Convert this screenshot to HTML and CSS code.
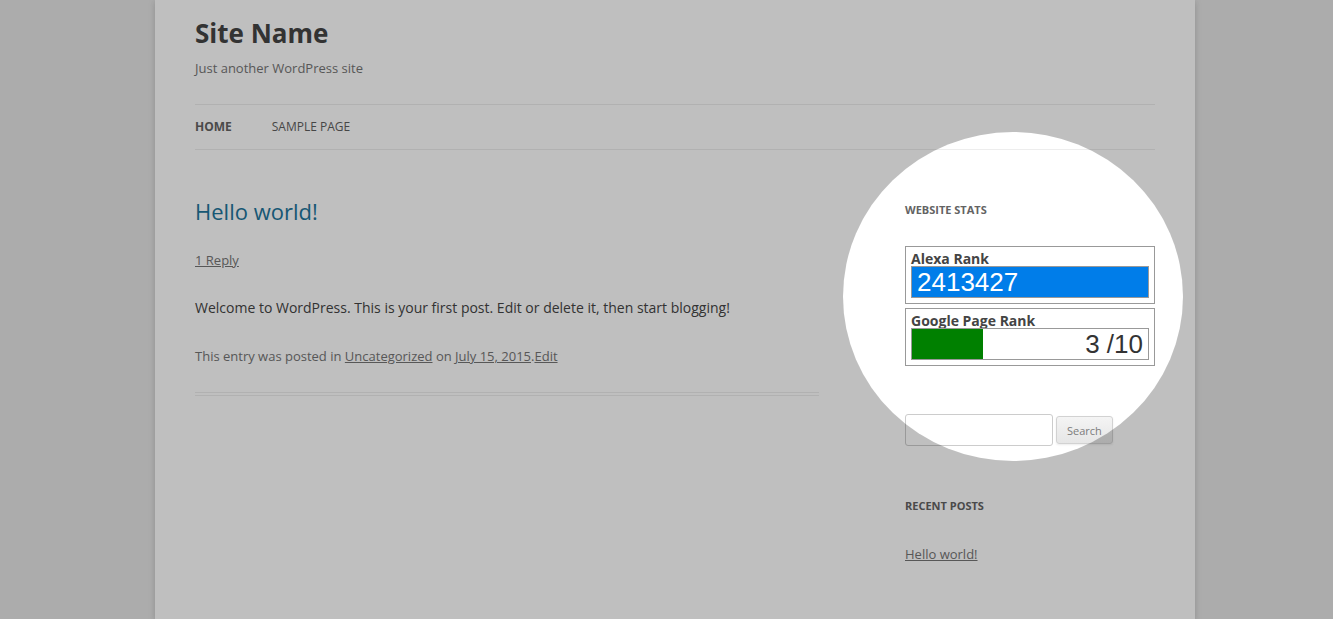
FILE: index.html
```html
<!DOCTYPE html>
<html lang="en">
<head>
<meta charset="utf-8">
<title>Site Name | Just another WordPress site</title>
<link rel="stylesheet" href="styles.css">
</head>
<body>
<div class="page">
  <div class="site">
    <header class="site-header">
      <h1 class="site-title">Site Name</h1>
      <h2 class="site-description">Just another WordPress site</h2>
      <nav class="main-navigation">
        <ul class="nav-menu">
          <li class="current"><a href="#">Home</a></li>
          <li><a href="#">Sample Page</a></li>
        </ul>
      </nav>
    </header>

    <div class="main">
      <div class="content">
        <article class="post">
          <h1 class="entry-title">Hello world!</h1>
          <div class="comments-link"><a href="#">1 Reply</a></div>
          <div class="entry-content">
            <p>Welcome to WordPress. This is your first post. Edit or delete it, then start blogging!</p>
          </div>
          <footer class="entry-meta">This entry was posted in <a href="#">Uncategorized</a> on <a href="#">July 15, 2015</a>.<a href="#">Edit</a></footer>
        </article>
      </div>

      <aside class="sidebar">
        <section class="widget">
          <h3 class="widget-title">Website Stats</h3>
          <div class="stat-box">
            <div class="stat-label">Alexa Rank</div>
            <div class="stat-bar alexa"><span class="stat-value">2413427</span></div>
          </div>
          <div class="stat-box">
            <div class="stat-label">Google Page Rank</div>
            <div class="stat-bar pagerank">
              <div class="pr-fill" style="width: 30%"></div>
              <span class="stat-value right">3 /10</span>
            </div>
          </div>
        </section>

        <form class="search-form">
          <input class="search-input" type="text">
          <button class="search-button" type="button">Search</button>
        </form>

        <section class="widget recent">
          <h3 class="widget-title">Recent Posts</h3>
          <ul class="recent-list">
            <li><a href="#">Hello world!</a></li>
          </ul>
        </section>
      </aside>
    </div>

    <div class="spotlight"></div>
  </div>
</div>
</body>
</html>
```

FILE: styles.css
```css
html, body {
  margin: 0;
  padding: 0;
  height: 100%;
  overflow: hidden;
}

body {
  background: #e6e6e6;
  font-family: "Open Sans", "Noto Sans", sans-serif;
  color: #444;
}

.page {
  padding-left: 17px;
  height: 100%;
}

.site {
  position: relative;
  width: 1040px;
  box-sizing: border-box;
  margin: 0 auto;
  padding: 0 40px;
  min-height: 100%;
  background: #fff;
  box-shadow: rgba(100, 100, 100, 0.3) 0 2px 6px;
}

a {
  color: #757575;
}

/* Header */
.site-header {
  padding-top: 15px;
}

.site-title {
  margin: 0;
  font-size: 26px;
  line-height: 36px;
  font-weight: 700;
  color: #444;
}

.site-description {
  margin: 7px 0 0;
  font-size: 13px;
  line-height: 20px;
  font-weight: 400;
  color: #757575;
}

.main-navigation {
  margin-top: 26px;
  border-top: 1px solid #ededed;
  border-bottom: 1px solid #ededed;
}

.nav-menu {
  list-style: none;
  margin: 0;
  padding: 0;
  display: flex;
}

.nav-menu li {
  margin-right: 40px;
  font-size: 12px;
  line-height: 44px;
  text-transform: uppercase;
}

.nav-menu a {
  color: #5e5e5e;
  text-decoration: none;
}

.nav-menu .current a {
  color: #636363;
  font-weight: 700;
}

/* Main */
.main {
  display: flex;
  justify-content: space-between;
  align-items: flex-start;
}

.content {
  width: 624px;
}

.post {
  padding-top: 47px;
  padding-bottom: 26px;
  border-bottom: 4px double #ededed;
}

.entry-title {
  margin: 0;
  font-size: 22px;
  line-height: 28px;
  font-weight: 400;
  color: #21759b;
}

.comments-link {
  margin-top: 25px;
  font-size: 13px;
  line-height: 20px;
}

.entry-content p {
  margin: 26px 0 0;
  font-size: 14px;
  line-height: 24px;
  color: #444;
}

.entry-meta {
  margin-top: 26px;
  font-size: 13px;
  line-height: 20px;
  color: #757575;
}

/* Sidebar */
.sidebar {
  width: 250px;
  padding-top: 51px;
}

.widget-title {
  margin: 0;
  font-size: 11px;
  line-height: 18px;
  font-weight: 700;
  text-transform: uppercase;
  color: #636363;
}

.widget > .widget-title {
  margin-bottom: 27px;
}

.stat-box {
  border: 1px solid #999;
  padding: 4px 5px 5px;
}

.stat-box + .stat-box {
  margin-top: 4px;
}

.stat-label {
  font-size: 14px;
  line-height: 15px;
  font-weight: 700;
  color: #444;
}

.stat-bar {
  position: relative;
  height: 30px;
  border: 1px solid #999;
  display: flex;
  align-items: stretch;
  font-family: "Liberation Sans", Arial, sans-serif;
  font-size: 26px;
  line-height: 30px;
}

.stat-bar.alexa {
  background: #007de9;
  color: #fff;
}

.stat-bar.pagerank {
  background: #fff;
  color: #333;
}

.pr-fill {
  background: #008000;
  height: 100%;
}

.stat-value {
  padding-left: 5px;
}

.stat-value.right {
  margin-left: auto;
  padding: 0 5px 0 0;
}

.search-form {
  margin-top: 48px;
  display: flex;
  align-items: center;
  gap: 3px;
}

.search-input {
  box-sizing: border-box;
  width: 148px;
  height: 32px;
  margin: 0;
  border: 1px solid #ccc;
  border-radius: 3px;
  background: #fff;
  padding: 6px;
}

.search-button {
  box-sizing: border-box;
  height: 28px;
  margin: 0;
  padding: 1px 10px 0;
  font-family: "Open Sans", sans-serif;
  font-size: 11px;
  line-height: 16px;
  color: #7c7c7c;
  border: 1px solid #d2d2d2;
  border-radius: 3px;
  background: linear-gradient(to bottom, #f4f4f4, #e6e6e6);
  box-shadow: 0 1px 2px rgba(64, 64, 64, 0.1);
}

.recent {
  margin-top: 51px;
}

.recent-list {
  list-style: none;
  margin: 28px 0 0;
  padding: 0;
  font-size: 13px;
  line-height: 22px;
}

/* Spotlight overlay */
.spotlight {
  position: absolute;
  left: 688px;
  top: 132px;
  width: 340px;
  height: 329px;
  border-radius: 50%;
  box-shadow: 0 0 0 2400px rgba(0, 0, 0, 0.25);
  pointer-events: none;
  z-index: 10;
}
```
